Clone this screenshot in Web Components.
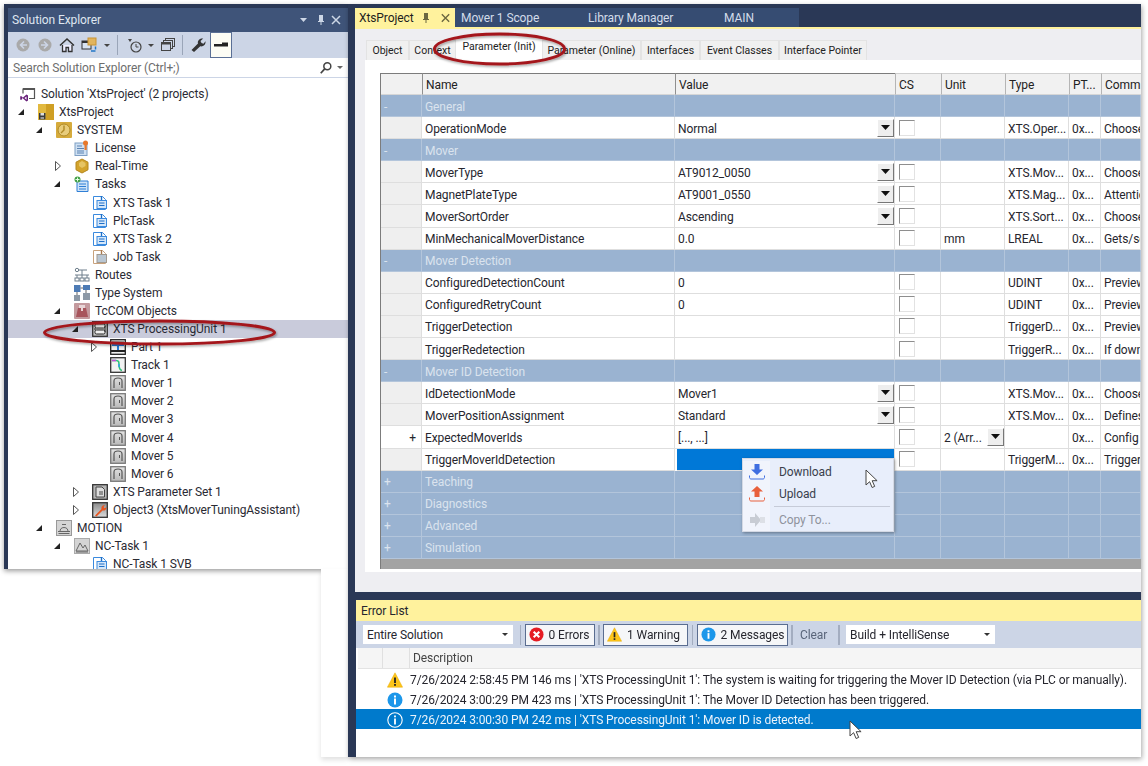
<!DOCTYPE html>
<html>
<head>
<meta charset="utf-8">
<title>XtsProject</title>
<style>
    html, body { margin: 0; padding: 0; background: #fff; overflow: hidden; }
    body { width: 1148px; height: 766px; font: 12px Roboto, "Liberation Sans", sans-serif; color: #1e1e1e; }
</style>
</head>
<body>
<main-window>
    <solution-explorer slot="left">
        <tree-row level="0" icon="solution">Solution 'XtsProject' (2 projects)</tree-row>
        <tree-row level="1" icon="project" exp="open">XtsProject</tree-row>
        <tree-row level="2" icon="system" exp="open">SYSTEM</tree-row>
        <tree-row level="3" icon="license">License</tree-row>
        <tree-row level="3" icon="realtime" exp="closed">Real-Time</tree-row>
        <tree-row level="3" icon="tasks" exp="open">Tasks</tree-row>
        <tree-row level="4" icon="task">XTS Task 1</tree-row>
        <tree-row level="4" icon="task">PlcTask</tree-row>
        <tree-row level="4" icon="task">XTS Task 2</tree-row>
        <tree-row level="4" icon="jobtask">Job Task</tree-row>
        <tree-row level="3" icon="routes">Routes</tree-row>
        <tree-row level="3" icon="typesystem">Type System</tree-row>
        <tree-row level="3" icon="tccom" exp="open">TcCOM Objects</tree-row>
        <tree-row level="4" icon="unit" exp="open" selected>XTS ProcessingUnit 1</tree-row>
        <tree-row level="5" icon="part" exp="closed">Part 1</tree-row>
        <tree-row level="5" icon="track">Track 1</tree-row>
        <tree-row level="5" icon="mover">Mover 1</tree-row>
        <tree-row level="5" icon="mover">Mover 2</tree-row>
        <tree-row level="5" icon="mover">Mover 3</tree-row>
        <tree-row level="5" icon="mover">Mover 4</tree-row>
        <tree-row level="5" icon="mover">Mover 5</tree-row>
        <tree-row level="5" icon="mover">Mover 6</tree-row>
        <tree-row level="4" icon="paramset" exp="closed">XTS Parameter Set 1</tree-row>
        <tree-row level="4" icon="tuning" exp="closed">Object3 (XtsMoverTuningAssistant)</tree-row>
        <tree-row level="2" icon="motion" exp="open">MOTION</tree-row>
        <tree-row level="3" icon="nctask" exp="open">NC-Task 1</tree-row>
        <tree-row level="4" icon="task">NC-Task 1 SVB</tree-row>
    </solution-explorer>

    <doc-tabs slot="tabs"></doc-tabs>

    <doc-page slot="doc">
        <prop-grid>
            <prop-cat sign="-">General</prop-cat>
            <prop-row name="OperationMode" value="Normal" drop type="XTS.Oper..." comm="Choose"></prop-row>
            <prop-cat sign="-">Mover</prop-cat>
            <prop-row name="MoverType" value="AT9012_0050" drop type="XTS.Mov..." comm="Choose"></prop-row>
            <prop-row name="MagnetPlateType" value="AT9001_0550" drop type="XTS.Mag..." comm="Attention"></prop-row>
            <prop-row name="MoverSortOrder" value="Ascending" drop type="XTS.Sort..." comm="Choose"></prop-row>
            <prop-row name="MinMechanicalMoverDistance" value="0.0" unit="mm" type="LREAL" comm="Gets/sets"></prop-row>
            <prop-cat sign="-">Mover Detection</prop-cat>
            <prop-row name="ConfiguredDetectionCount" value="0" type="UDINT" comm="Preview"></prop-row>
            <prop-row name="ConfiguredRetryCount" value="0" type="UDINT" comm="Preview"></prop-row>
            <prop-row name="TriggerDetection" type="TriggerD..." comm="Preview"></prop-row>
            <prop-row name="TriggerRedetection" type="TriggerR..." comm="If down"></prop-row>
            <prop-cat sign="-">Mover ID Detection</prop-cat>
            <prop-row name="IdDetectionMode" value="Mover1" drop type="XTS.Mov..." comm="Choose"></prop-row>
            <prop-row name="MoverPositionAssignment" value="Standard" drop type="XTS.Mov..." comm="Defines"></prop-row>
            <prop-row name="ExpectedMoverIds" value="[..., ...]" unit="2 (Arr..." unitdrop expand comm="Config"></prop-row>
            <prop-row name="TriggerMoverIdDetection" selected type="TriggerM..." comm="Trigger"></prop-row>
            <prop-cat sign="+">Teaching</prop-cat>
            <prop-cat sign="+">Diagnostics</prop-cat>
            <prop-cat sign="+">Advanced</prop-cat>
            <prop-cat sign="+">Simulation</prop-cat>
        </prop-grid>
    </doc-page>

    <error-list slot="errors"></error-list>

    <context-menu slot="overlay"></context-menu>
</main-window>

<script>
const ICONS = {
    solution: `<path d="M3 2.500h11.500v10H9" fill="none" stroke="#555" stroke-width="1.200"/><path d="M3 2.500v5" stroke="#555" stroke-width="1.200"/><rect x="3" y="2" width="11.500" height="2" fill="#555"/><path d="M1 10l2 1.500L6.500 8.500 8 9.500v5l-1.500 1-3.500-3-2 1.500-.8-.5v-3z" fill="#68217a"/><path d="M3 11.500l-1 .8 1 .8zM6.500 10.500l-2 1.600 2 1.600z" fill="#fff"/>`,
    project: `<rect x="0" y="0" width="16" height="16" fill="#e2b93f"/><path d="M8 0h8v16H8z" fill="#cf9f24"/><rect x="1" y="9" width="6.500" height="6.500" fill="#3a3a3a"/><rect x="2.500" y="9" width="3.500" height="2.500" fill="#ddd"/><rect x="2.500" y="13" width="3.500" height="2" fill="#999"/>`,
    system: `<rect x="0" y="0" width="16" height="16" rx="1" fill="#d6ab3c"/><circle cx="8" cy="8" r="6" fill="#e8cc7a" stroke="#b08a26"/><path d="M8 3.500v4.500l-3 3" stroke="#b08a26" stroke-width="1.400" fill="none"/>`,
    license: `<rect x="1" y="3" width="12" height="12.500" fill="#cfe0f2" stroke="#7f9fc4"/><path d="M3 6h5M3 8.500h7M3 11h7M3 13h7" stroke="#5a83b3"/><circle cx="11.500" cy="3" r="2.500" fill="#e8782a"/><rect x="10.500" y="4" width="2.200" height="6" fill="#e8782a"/>`,
    realtime: `<path d="M8 1l6 3.200v7.600L8 15l-6-3.200V4.200z" fill="#d3a32c" stroke="#b5871c"/><path d="M8 3l3.500 2v3L8 10 5 8V5z" fill="#e6c463"/>`,
    tasks: `<path d="M3 5h11v10.500H3z" fill="#cfe3f7" stroke="#2f7fd6"/><path d="M5 8h7M5 10.500h7M5 13h7" stroke="#2f7fd6"/><circle cx="3.500" cy="3.500" r="3" fill="#43a047"/><path d="M1.500 3.500h4M3.500 1.500v4" stroke="#e5ffe5"/>`,
    task: `<path d="M1.500 1.500h9l3 3v10h-12z" fill="#fff" stroke="#3b8ade"/><rect x="5" y="5.500" width="9.500" height="8" fill="#d5e7f9" stroke="#3b8ade"/><path d="M7 8h5.500M7 10.500h5.500" stroke="#1e6fc8"/><path d="M9.500 1v4" stroke="#1e6fc8" stroke-width="1.400"/>`,
    jobtask: `<path d="M1.500 1.500h9l3 3v10h-12z" fill="#fff" stroke="#c9a27c"/><rect x="5" y="5.500" width="9.500" height="8" fill="#b9c6d2" stroke="#a39a8f"/><path d="M9.500 1v4" stroke="#a9794f" stroke-width="1.400"/>`,
    routes: `<g fill="none" stroke="#6f7f8c"><circle cx="3" cy="3" r="1.700"/><path d="M5 3h8M1 8h14M8 3v5M3 8v3M8 8v3M13 8v3"/><rect x="1" y="11" width="4" height="3"/><rect x="6" y="11" width="4" height="3"/><rect x="11" y="11" width="4" height="3"/></g>`,
    typesystem: `<rect x="0" y="0" width="6.500" height="7" fill="#4d7bb5"/><rect x="9" y="0" width="7" height="5" fill="#4d7bb5"/><rect x="9" y="8" width="7" height="7" fill="#8d99a6"/><rect x="0" y="10" width="6" height="6" fill="#8d99a6"/><path d="M6.500 3H9M3 7v3M12 5v3" stroke="#666"/>`,
    tccom: `<rect x="0" y="0" width="16" height="16" rx="1" fill="#c49a9e"/><rect x="5" y="2" width="6" height="3" fill="#e9d6d7"/><path d="M4 5h8l2 9H2z" fill="#a8555c"/><rect x="7" y="5" width="2" height="3" fill="#e9d6d7"/>`,
    unit: `<rect x=".7" y=".7" width="14.600" height="14.600" fill="#c4c4c4" stroke="#333" stroke-width="1.300"/><rect x="3" y="3" width="10" height="4" rx="1.500" fill="#eee" stroke="#222"/><rect x="3" y="9" width="10" height="4" rx="1.500" fill="#eee" stroke="#222"/><path d="M13 5v6M3 7v2" stroke="#222"/>`,
    part: `<rect x=".7" y=".7" width="14.600" height="14.600" fill="#eee" stroke="#222" stroke-width="1.300"/><path d="M2 6h12" stroke="#2678d2" stroke-width="2"/><path d="M8 5v6" stroke="#2678d2" stroke-width="2"/><path d="M1 12h14" stroke="#222" stroke-width="2"/><path d="M2 2.500h12" stroke="#999"/>`,
    track: `<rect x=".7" y=".7" width="14.600" height="14.600" fill="#f2f2f2" stroke="#333" stroke-width="1.300"/><path d="M2 3.500h4c3 0 3 1.500 3 4.500 0 3 1 5 3 5.500" fill="none" stroke="#2ec27a" stroke-width="1.600"/><path d="M2 3.500h4" stroke="#c14fd4" stroke-width="1.600"/><path d="M9 7v3" stroke="#38a0e6" stroke-width="1.600"/>`,
    mover: `<defs><linearGradient id="m" x1="0" y1="0" x2="0" y2="1"><stop offset="0" stop-color="#e4e4e4"/><stop offset="1" stop-color="#b8b8b8"/></linearGradient></defs><rect x=".7" y=".7" width="14.600" height="14.600" fill="url(#m)" stroke="#7a7a7a" stroke-width="1.300"/><path d="M4 13V6c0-2 1.500-3 4-3s4 1 4 3v7" fill="none" stroke="#555" stroke-width="1.200"/><path d="M9.500 7v3" stroke="#555"/>`,
    paramset: `<rect x=".7" y=".7" width="14.600" height="14.600" fill="#b5b5b5" stroke="#333" stroke-width="1.300"/><path d="M4 3h6l2.500 2.500V13H4z" fill="#ddd" stroke="#444"/><path d="M7 8h4M7 10h4" stroke="#444"/>`,
    tuning: `<defs><linearGradient id="g" x1="0" y1="0" x2="0" y2="1"><stop offset="0" stop-color="#8a8a8a"/><stop offset="1" stop-color="#dcdcdc"/></linearGradient></defs><rect x=".7" y=".7" width="14.600" height="14.600" fill="url(#g)" stroke="#333" stroke-width="1.300"/><path d="M3 13.500L9.500 7c-.5-2 .8-4 3.500-4l-1.500 2 1 1.200 2-1c0 2.500-2 3.800-4 3.300L4.500 14.500z" fill="#e8551f"/>`,
    motion: `<rect x=".5" y=".5" width="15" height="15" fill="#d4d4d4" stroke="#999"/><path d="M2 11.500h12M4 11.500c0-2 1-4 4-4s4 2 4 4" fill="none" stroke="#666"/><path d="M6 4.500h4M2.500 13.500h11" stroke="#666"/>`,
    nctask: `<rect x=".5" y=".5" width="15" height="15" fill="#d4d4d4" stroke="#aaa"/><path d="M2 13l4-8 3 5 2-3 3 6z" fill="none" stroke="#666"/><path d="M2 14h12" stroke="#666"/>`,
    back: `<circle cx="8" cy="8" r="6.500" fill="#a9a9a9"/><path d="M9 4.500L5.500 8 9 11.500M6 8h6" fill="none" stroke="#ccd5e6" stroke-width="1.600"/>`,
    forward: `<circle cx="8" cy="8" r="6.500" fill="#a9a9a9"/><path d="M7 4.500L10.500 8 7 11.500M10 8H4" fill="none" stroke="#ccd5e6" stroke-width="1.600"/>`,
    home: `<path d="M1 8.500L8 2l7 6.500" fill="none" stroke="#333" stroke-width="1.500"/><path d="M3.500 8v6.500h3.500v-4h2.500v4H13V8" fill="#eef" stroke="#333" stroke-width="1.300"/>`,
    sync: `<rect x="1" y="4" width="9" height="8" fill="#d9e4f2" stroke="#333"/><path d="M1 4h9v2H1z" fill="#333"/><rect x="7" y="1" width="8" height="7" fill="#e2b45c" stroke="#c99332"/><path d="M10 14h4.500M14.500 9.500v3" stroke="#2277c8" stroke-width="1.500"/>`,
    clock: `<circle cx="9" cy="10" r="5" fill="none" stroke="#444" stroke-width="1.200"/><path d="M9 7v3h2.500" fill="none" stroke="#444"/><path d="M1 2h4L3 5z" fill="#444"/>`,
    copies: `<rect x="5.500" y="1.500" width="9" height="8" fill="none" stroke="#444"/><rect x="3.500" y="3.500" width="9" height="8" fill="#ccd5e6" stroke="#444"/><rect x="1.500" y="5.500" width="9" height="8" fill="#ccd5e6" stroke="#444"/><path d="M1.500 6.500h9" stroke="#444" stroke-width="2"/>`,
    wrench: `<path d="M1.500 13L8 6.500C7.200 3.800 9.500.8 13.200 1.500L10.500 4l1 2 2 .8 2-2.500c.5 3.500-2.500 5.700-5.200 5L4 15z" fill="#333"/>`,
    pinned: `<rect x="1" y="7" width="14" height="2.500" fill="#222"/><rect x="9" y="5.500" width="6" height="2" fill="#222"/>`,
    search: `<circle cx="9.500" cy="6" r="4" fill="none" stroke="#444" stroke-width="1.700"/><path d="M6.500 9L2 14" stroke="#444" stroke-width="2"/>`,
    error: `<circle cx="8" cy="8" r="7.500" fill="#e51c23"/><path d="M5 5l6 6M11 5l-6 6" stroke="#fff" stroke-width="2.200"/>`,
    warn: `<path d="M8 .8l7.600 14.400H.4z" fill="#fcc419" stroke="#e8ab00" stroke-width=".5"/><path d="M8 5.500v5.500" stroke="#222" stroke-width="1.800"/><rect x="7.100" y="12" width="1.800" height="1.800" fill="#222"/>`,
    info: `<circle cx="8" cy="8" r="7.500" fill="#1c97ea"/><rect x="7" y="6.500" width="2" height="6" fill="#fff"/><rect x="7" y="3.500" width="2" height="2" fill="#fff"/>`,
    infosel: `<circle cx="8" cy="8" r="7.200" fill="none" stroke="#fff" stroke-width="1.100"/><rect x="7.100" y="6.500" width="1.800" height="6" fill="#fff"/><rect x="7.100" y="3.500" width="1.800" height="1.800" fill="#fff"/>`,
    download: `<path d="M5.500 0h5v5.500H14L8 11 2 5.500h3.500z" fill="#3f6ee0"/><path d="M.5 11.500v2c0 .8.700 1.500 1.500 1.500h12c.8 0 1.500-.7 1.500-1.500v-2" fill="none" stroke="#3f6ee0" stroke-width="1"/>`,
    upload: `<path d="M5.500 11h5V5.500H14L8 0 2 5.500h3.500z" fill="#e8603c"/><path d="M.5 11.500v2c0 .8.700 1.500 1.500 1.500h12c.8 0 1.500-.7 1.500-1.500v-2" fill="none" stroke="#e8603c" stroke-width="1"/>`,
    copyto: `<path d="M1 5h5V1l6 7-6 7v-4H1z" fill="#c8ccd4"/><path d="M11 5h5v6h-5z" fill="#dde0e6"/>`
};

const SHARED_FONT = `font-family: Roboto, "Liberation Sans", sans-serif; font-size: 12px; letter-spacing: -.09px;`;

class VsIcon extends HTMLElement {
    connectedCallback() {
        const shadow = this.shadowRoot || this.attachShadow({ mode: "open" });
        const size = this.getAttribute("size") || 16;
        const name = this.getAttribute("name");
        shadow.innerHTML = `
            <style>:host { display: inline-flex; flex: none; width: ${size}px; height: ${size}px; } svg { display: block; }</style>
            <svg width="${size}" height="${size}" viewBox="0 0 16 16">${ICONS[name] || ""}</svg>
        `;
    }
}
customElements.define("vs-icon", VsIcon);

const windowTemplate = document.createElement("template");
windowTemplate.innerHTML = `
    <style>
        :host { display: block; position: relative; width: 1148px; height: 766px; filter: blur(.35px); ${SHARED_FONT} }
        .root { display: flex; align-items: flex-start; padding: 4px 0 0 4px; }
        .left { display: flex; flex-direction: column; width: 344px; }
        .left-frame {
            height: 565px; box-sizing: border-box; padding: 4px 0 0 4px; background: #2a3856;
            box-shadow: 0 2px 5px rgba(0, 0, 0, .4);
        }
        .under {
            align-self: flex-end; width: 27px; height: 188px; background: #fff; position: relative;
            box-shadow: 0 3px 5px rgba(0, 0, 0, .12);
        }
        .right {
            display: flex; flex-direction: column; width: 793px; height: 753px; background: #2a3856;
            box-shadow: 1px 2px 5px rgba(0, 0, 0, .35); position: relative;
        }
        .tabs { height: 23px; padding: 4px 0 0 7px; box-sizing: border-box; flex: none; }
        .doc { height: 565px; margin-left: 7px; flex: none; }
        .errors { height: 157px; margin: 8px 0 0 8px; flex: none; }
        svg.marks { position: absolute; left: 0; top: 0; pointer-events: none; }
        .over { position: absolute; left: 742px; top: 458px; }
    </style>
    <div class="root">
        <div class="left">
            <div class="left-frame"><slot name="left"></slot></div>
            <div class="under"></div>
        </div>
        <div class="right">
            <div class="tabs"><slot name="tabs"></slot></div>
            <div class="doc"><slot name="doc"></slot></div>
            <div class="errors"><slot name="errors"></slot></div>
        </div>
    </div>
    <div class="over"><slot name="overlay"></slot></div>
    <svg class="marks" width="1148" height="766">
        <defs>
            <filter id="soft" x="-5%" y="-30%" width="110%" height="160%">
                <feDropShadow dx="1" dy="1.500" stdDeviation="1" flood-color="#000" flood-opacity=".35"/>
            </filter>
            <path id="arrow" d="M0 0v15l3.600-3.300 2.500 5.800 2.600-1.100-2.500-5.700h4.900z" fill="#fff" stroke="#444" stroke-width="1"/>
        </defs>
        <ellipse cx="159.500" cy="332.500" rx="115" ry="11.500" fill="none" stroke="#a4161a" stroke-width="3" filter="url(#soft)"/>
        <ellipse cx="499.500" cy="49" rx="65" ry="15" fill="none" stroke="#a4161a" stroke-width="3" filter="url(#soft)"/>
        <use href="#arrow" x="866" y="470"/>
        <use href="#arrow" x="850" y="721"/>
    </svg>
`;

class MainWindow extends HTMLElement {
    constructor() {
        super();
        this.attachShadow({ mode: "open" }).append(windowTemplate.content.cloneNode(true));
    }
}
customElements.define("main-window", MainWindow);

const explorerTemplate = document.createElement("template");
explorerTemplate.innerHTML = `
    <style>
        :host { display: flex; flex-direction: column; width: 340px; height: 561px; overflow: hidden; background: #fff; ${SHARED_FONT} }
        .title {
            display: flex; align-items: center; height: 24px; flex: none; padding: 0 6px 0 4px;
            background: #3f5479; color: #dfe6f0;
        }
        .title span { flex: 1; }
        .title svg { margin-left: 4px; }
        .title svg:first-of-type { margin-right: 3px; }
        .bar {
            display: flex; align-items: center; height: 26px; flex: none; padding-left: 7px;
            background: #ccd5e6;
        }
        .bar vs-icon { margin-right: 6px; }
        .drop { flex: none; width: 0; height: 0; border: 3px solid transparent; border-top-color: #444; border-bottom: 0; }
        .sep { width: 1px; height: 20px; background: #9aa5b8; margin: 0 7px 0 0; }
        .on {
            display: flex; align-items: center; justify-content: center; width: 20px; height: 24px;
            background: #fcfcf4; border: 1px solid #5a6f95; margin-left: -2px;
        }
        .on vs-icon { margin: 0; }
        .search {
            display: flex; align-items: center; height: 20px; flex: none; padding: 0 3px 0 5px;
            background: #fff; border-bottom: 1px solid #ccd5e6; color: #6d6d6d; box-sizing: border-box; white-space: nowrap;
        }
        .search .text { flex: 1; }
        .search .drop { margin: 0 2px 0 4px; border-top-color: #666; }
        .tree { padding-top: 7px; flex: 1; overflow: hidden; }
    </style>
    <div class="title">
        <span>Solution Explorer</span>
        <svg width="10" height="12" viewBox="0 0 10 12"><path d="M1 4h7L4.500 8z" fill="#cdd7e6"/></svg>
        <svg width="10" height="12" viewBox="0 0 10 12"><path d="M3 1h4v6h1v1H5.500v3h-1V8H2V7h1z" fill="#cdd7e6"/></svg>
        <svg width="12" height="12" viewBox="0 0 12 12"><path d="M2 2l8 8M10 2l-8 8" stroke="#cdd7e6" stroke-width="1.500"/></svg>
    </div>
    <div class="bar">
        <vs-icon name="back"></vs-icon>
        <vs-icon name="forward"></vs-icon>
        <vs-icon name="home"></vs-icon>
        <vs-icon name="sync"></vs-icon>
        <span class="drop" style="margin: 0 7px 0 1px"></span><span class="sep" style="margin-right: 9px"></span>
        <vs-icon name="clock"></vs-icon>
        <span class="drop" style="margin: 0 6px 0 -1px"></span>
        <vs-icon name="copies"></vs-icon>
        <span class="sep"></span>
        <vs-icon name="wrench"></vs-icon>
        <span class="on"><vs-icon name="pinned"></vs-icon></span>
    </div>
    <div class="search">
        <span class="text">Search Solution Explorer (Ctrl+;)</span>
        <vs-icon name="search" size="14"></vs-icon>
        <span class="drop"></span>
    </div>
    <div class="tree"><slot></slot></div>
`;

class SolutionExplorer extends HTMLElement {
    constructor() {
        super();
        this.attachShadow({ mode: "open" }).append(explorerTemplate.content.cloneNode(true));
    }
}
customElements.define("solution-explorer", SolutionExplorer);

class TreeRow extends HTMLElement {
    connectedCallback() {
        const level = Number(this.getAttribute("level") || 0);
        const exp = this.getAttribute("exp");
        const icon = this.getAttribute("icon");
        let arrow = "";
        if (exp === "open") arrow = `<path d="M7 3v6H1z" fill="#222"/>`;
        if (exp === "closed") arrow = `<path d="M2.500 1.500L7.500 6 2.500 10.500z" fill="#fff" stroke="#555"/>`;
        this.attachShadow({ mode: "open" }).innerHTML = `
            <style>
                :host { display: flex; align-items: center; height: 18.080px; white-space: nowrap; color: #2a2a33; }
                :host([selected]) { background: #c9cbdb; }
                .exp { flex: none; display: flex; justify-content: center; width: 18px; margin: 0 7px 0 ${18 * level - 13}px; }
                vs-icon { margin-right: 5px; }
            </style>
            <span class="exp"><svg width="10" height="12" viewBox="0 0 10 12">${arrow}</svg></span>
            <vs-icon name="${icon}"></vs-icon>
            <slot></slot>
        `;
    }
}
customElements.define("tree-row", TreeRow);

const docTabsTemplate = document.createElement("template");
docTabsTemplate.innerHTML = `
    <style>
        :host { display: flex; height: 19px; ${SHARED_FONT} }
        .tab {
            display: flex; align-items: center; box-sizing: border-box; height: 19px; padding: 1px 0 0 6px;
            background: #364c72; color: #d3dcea;
        }
        .active { width: 100px; padding-left: 4px; background: #fff29d; color: #1e1e1e; }
        .active span { flex: 1; }
        .active svg { margin-right: 4px; }
        .active svg:first-of-type { margin-right: 9px; }
    </style>
    <div class="tab active">
        <span>XtsProject</span>
        <svg width="10" height="12" viewBox="0 0 10 12"><path d="M3 1h4v6h1v1H5.500v3h-1V8H2V7h1z" fill="#6b6740"/></svg>
        <svg width="11" height="12" viewBox="0 0 12 12"><path d="M2 2l8 8M10 2l-8 8" stroke="#6b6740" stroke-width="1.500"/></svg>
    </div>
    <div class="tab" style="width: 127px">Mover 1 Scope</div>
    <div class="tab" style="width: 136px">Library Manager</div>
    <div class="tab" style="width: 81px">MAIN</div>
`;

class DocTabs extends HTMLElement {
    constructor() {
        super();
        this.attachShadow({ mode: "open" }).append(docTabsTemplate.content.cloneNode(true));
    }
}
customElements.define("doc-tabs", DocTabs);

const docPageTemplate = document.createElement("template");
docPageTemplate.innerHTML = `
    <style>
        :host { display: flex; flex-direction: column; height: 565px; background: #eeeef2; border-top: 2px solid #fff29d; box-sizing: border-box; ${SHARED_FONT} }
        .strip { display: flex; height: 20px; margin-top: 11px; padding-left: 11px; flex: none; align-items: flex-end; font-size: 10.500px; letter-spacing: 0; }
        .strip div {
            box-sizing: border-box; height: 20px; display: flex; align-items: center; justify-content: center; white-space: nowrap;
            background: #f0f0f0; border: 1px solid #e3e3e3; border-bottom: 0; color: #222;
        }
        .strip .sel { height: 24px; background: #fff; border: 0; padding-bottom: 4px; }
        .page { background: #fff; margin-left: 10px; height: 512px; box-sizing: border-box; padding: 13px 0 3px 15px; overflow: hidden; flex: none; }
    </style>
    <div class="strip">
        <div style="width: 43px">Object</div>
        <div style="width: 47px">Context</div>
        <div class="sel" style="width: 86px">Parameter (Init)</div>
        <div style="width: 99px">Parameter (Online)</div>
        <div style="width: 59px">Interfaces</div>
        <div style="width: 79px">Event Classes</div>
        <div style="width: 88px">Interface Pointer</div>
    </div>
    <div class="page"><slot></slot></div>
`;

class DocPage extends HTMLElement {
    constructor() {
        super();
        this.attachShadow({ mode: "open" }).append(docPageTemplate.content.cloneNode(true));
    }
}
customElements.define("doc-page", DocPage);

const gridTemplate = document.createElement("template");
gridTemplate.innerHTML = `
    <style>
        :host {
            --cols: 41px 253px 220px 46px 64px 64px 32px 40px;
            display: block; height: 496px; overflow: hidden; box-sizing: border-box;
            border-left: 1.500px solid #7c7c7c; background: #a3a3a3;
        }
        .head { display: grid; grid-template-columns: var(--cols); height: 22px; background: #f1f1f1; box-sizing: border-box; }
        .head div {
            box-sizing: border-box; display: flex; align-items: center; padding: 2px 0 0 3px; color: #222;
            border-top: 1.500px solid #cfcfcf; border-bottom: 1.500px solid #d6d6d6; border-left: 1.500px solid #b5b5b5;
            white-space: nowrap; overflow: hidden;
        }
        .head .dark { border-top-color: #7c7c7c; border-left-color: #8f8f8f; }
        .head .first { border-left: 0; }
    </style>
    <div class="head">
        <div class="dark first"></div>
        <div class="dark">Name</div>
        <div class="dark">Value</div>
        <div>CS</div>
        <div>Unit</div>
        <div>Type</div>
        <div>PT...</div>
        <div>Comm</div>
    </div>
    <slot></slot>
`;

class PropGrid extends HTMLElement {
    constructor() {
        super();
        this.attachShadow({ mode: "open" }).append(gridTemplate.content.cloneNode(true));
    }
}
customElements.define("prop-grid", PropGrid);

class PropCat extends HTMLElement {
    connectedCallback() {
        const sign = this.getAttribute("sign");
        this.attachShadow({ mode: "open" }).innerHTML = `
            <style>
                :host { display: grid; grid-template-columns: var(--cols); height: 22.100px; background: #9ab3d1; color: #dbe3ee; }
                div { box-sizing: border-box; display: flex; align-items: center; padding: 2px 0 0 3px; border-right: 1.500px solid #b3c5db; border-bottom: 1.500px solid #b3c5db; }
            </style>
            <div>${sign}</div>
            <div><slot></slot></div>
            <div></div><div></div><div></div><div></div><div></div><div></div>
        `;
    }
}
customElements.define("prop-cat", PropCat);

const DROP_BTN = `<span class="btn"><svg width="9" height="5" viewBox="0 0 9 5"><path d="M0 0h9L4.500 5z" fill="#111"/></svg></span>`;

class PropRow extends HTMLElement {
    connectedCallback() {
        const attr = (n) => this.getAttribute(n) || "";
        const plus = this.hasAttribute("expand");
        this.attachShadow({ mode: "open" }).innerHTML = `
            <style>
                :host { display: grid; grid-template-columns: var(--cols); height: 22.100px; background: #fff; color: #26262e; }
                .c {
                    box-sizing: border-box; display: flex; align-items: center; padding: 2px 0 0 3px; min-width: 0;
                    border-right: 1.500px solid #dedede; border-bottom: 1.500px solid #dedede; white-space: nowrap; overflow: hidden;
                }
                .gut { background: ${plus ? "#fff" : "#efefef"}; justify-content: flex-end; padding-right: 5px; }
                .c b { font-weight: normal; flex: 1; }
                .sel { background: #0078d7; margin-left: 1.500px; }
                .box { padding-top: 0; }
                .check {
                    width: 16px; height: 16px; box-sizing: border-box; background: #fff; flex: none; margin-left: 1px;
                    border: 1px solid #e2e2e2; border-top-color: #8e8e8e; border-left-color: #8e8e8e;
                }
                .btn {
                    flex: none; box-sizing: border-box; width: 17px; height: 18px; display: flex; align-items: center; justify-content: center;
                    background: #eee; border: 1.500px solid #fff; border-right-color: #777; border-bottom-color: #777; margin-top: -2px;
                }
            </style>
            <div class="c gut">${plus ? "+" : ""}</div>
            <div class="c">${attr("name")}</div>
            <div class="c ${this.hasAttribute("selected") ? "sel" : ""}"><b>${attr("value")}</b>${this.hasAttribute("drop") ? DROP_BTN : ""}</div>
            <div class="c box"><span class="check"></span></div>
            <div class="c"><b>${attr("unit")}</b>${this.hasAttribute("unitdrop") ? DROP_BTN : ""}</div>
            <div class="c">${attr("type")}</div>
            <div class="c">${attr("type") || plus ? "0x..." : ""}</div>
            <div class="c">${attr("comm")}</div>
        `;
    }
}
customElements.define("prop-row", PropRow);

const errorTemplate = document.createElement("template");
errorTemplate.innerHTML = `
    <style>
        :host { display: flex; flex-direction: column; height: 157px; background: #fff; color: #26262e; ${SHARED_FONT} }
        .title { height: 21px; flex: none; display: flex; align-items: center; padding: 1px 0 0 5px; box-sizing: border-box; background: #fff29d; }
        .bar { height: 27px; flex: none; display: flex; align-items: center; padding-left: 7px; background: #ccd5e6; box-sizing: border-box; }
        .combo {
            display: flex; align-items: center; justify-content: space-between; height: 19px; box-sizing: border-box;
            background: #fff; padding: 0 5px 0 4px; flex: none;
        }
        .combo i { width: 0; height: 0; border: 3px solid transparent; border-top-color: #333; border-bottom: 0; }
        .sep { width: 1.500px; height: 20px; background: #a3adc0; margin: 0 3.500px; flex: none; }
        .toggle {
            display: flex; align-items: center; gap: 5px; height: 22px; box-sizing: border-box; padding-left: 3px; flex: none;
            background: #f5f6f8; border: 1.500px solid #5a6d90;
        }
        .clear { color: #59657a; box-sizing: border-box; width: 38px; padding-left: 4px; flex: none; }
        .head { height: 21px; flex: none; display: flex; background: #f5f5f5; margin-left: 2px; box-sizing: border-box; border-bottom: 1px solid #e3e3e3; }
        .head div { box-sizing: border-box; display: flex; align-items: center; border-right: 1.500px solid #e0e0e0; padding-left: 3px; color: #444; }
        .rows { flex: 1; }
        .r { display: flex; align-items: center; height: 20px; padding: 1px 0 0 31px; box-sizing: border-box; white-space: nowrap; }
        .r vs-icon { margin-right: 7px; }
        .r.sel { background: #007acc; color: #eaf3fb; }
    </style>
    <div class="title">Error List</div>
    <div class="bar">
        <div class="combo" style="width: 150px"><span>Entire Solution</span><i></i></div>
        <span class="sep" style="margin-left: 6.500px"></span>
        <div class="toggle" style="width: 70px"><vs-icon name="error" size="15"></vs-icon>0 Errors</div>
        <span class="sep"></span>
        <div class="toggle" style="width: 85px"><vs-icon name="warn" size="15"></vs-icon>1 Warning</div>
        <span class="sep"></span>
        <div class="toggle" style="width: 91px"><vs-icon name="info" size="15"></vs-icon>2 Messages</div>
        <span class="sep"></span>
        <span class="clear">Clear</span>
        <span class="sep" style="margin-left: 4px"></span>
        <div class="combo" style="width: 149px; margin-left: 3px"><span>Build + IntelliSense</span><i></i></div>
    </div>
    <div class="head">
        <div style="width: 25px"></div>
        <div style="width: 27px"></div>
        <div style="flex: 1; border-right: 0">Description</div>
    </div>
    <div class="rows">
        <div class="r"><vs-icon name="warn"></vs-icon>7/26/2024 2:58:45 PM 146 ms | 'XTS ProcessingUnit 1': The system is waiting for triggering the Mover ID Detection (via PLC or manually).</div>
        <div class="r"><vs-icon name="info"></vs-icon>7/26/2024 3:00:29 PM 423 ms | 'XTS ProcessingUnit 1': The Mover ID Detection has been triggered.</div>
        <div class="r sel"><vs-icon name="infosel"></vs-icon>7/26/2024 3:00:30 PM 242 ms | 'XTS ProcessingUnit 1': Mover ID is detected.</div>
    </div>
`;

class ErrorList extends HTMLElement {
    constructor() {
        super();
        this.attachShadow({ mode: "open" }).append(errorTemplate.content.cloneNode(true));
    }
}
customElements.define("error-list", ErrorList);

const menuTemplate = document.createElement("template");
menuTemplate.innerHTML = `
    <style>
        :host {
            display: block; width: 152px; height: 74px; background: #e8eefb; color: #3a3f4d; ${SHARED_FONT}
            box-shadow: 1px 1px 3px rgba(0, 0, 0, .35); border: 1px solid #d4d9e4; box-sizing: border-box; padding-top: 2px;
        }
        .item { display: flex; align-items: center; height: 22px; }
        .ico { width: 27px; height: 100%; display: flex; align-items: center; justify-content: center; background: #f1f4fc; margin-right: 9px; flex: none; }
        .line { display: flex; height: 4px; }
        .line .ico { margin-right: 4px; }
        .line hr { flex: 1; margin: 1px 3px 0 0; border: 0; border-top: 1px solid #c6cbd8; height: 0; }
        .off { color: #8e929c; }
    </style>
    <div class="item"><span class="ico"><vs-icon name="download"></vs-icon></span>Download</div>
    <div class="item"><span class="ico"><vs-icon name="upload"></vs-icon></span>Upload</div>
    <div class="line"><span class="ico"></span><hr></div>
    <div class="item off"><span class="ico"><vs-icon name="copyto"></vs-icon></span>Copy To...</div>
`;

class ContextMenu extends HTMLElement {
    constructor() {
        super();
        this.attachShadow({ mode: "open" }).append(menuTemplate.content.cloneNode(true));
    }
}
customElements.define("context-menu", ContextMenu);
</script>
</body>
</html>
